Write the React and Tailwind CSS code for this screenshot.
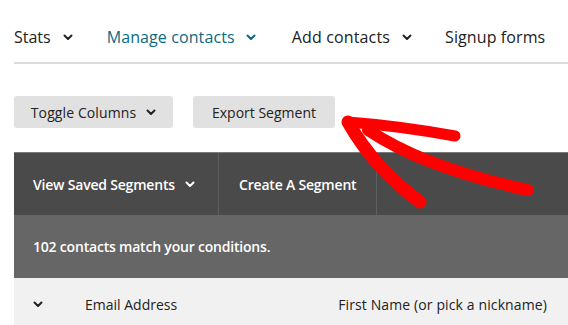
const Chevron = ({ className = "" }) => (
  <svg width="10" height="7" viewBox="0 0 10 7" className={className}>
    <polyline points="1.5,1.5 5,5 8.5,1.5" fill="none" stroke="currentColor" strokeWidth="2" strokeLinecap="round" strokeLinejoin="round" />
  </svg>
);

export default function App() {
  return (
    <div
      className="relative w-[568px] h-[325px] overflow-hidden bg-white"
      style={{ fontFamily: '"Open Sans", "Liberation Sans", sans-serif' }}
    >
      <div className="pl-[14px]">
        {/* top nav */}
        <nav className="flex items-center pt-[25px] pb-[13px] border-b-2 border-[#dcdcdc] text-[16px] leading-[24px] text-[#222]">
          <div className="flex items-center">
            <span>Stats</span>
            <Chevron className="ml-[12px] text-[#222]" />
          </div>
          <div className="flex items-center ml-[34px] text-[#0b6a80]">
            <span className="tracking-[0.1px]">Manage contacts</span>
            <Chevron className="ml-[11px]" />
          </div>
          <div className="flex items-center ml-[36px]">
            <span className="tracking-[0.15px]">Add contacts</span>
            <Chevron className="ml-[12px]" />
          </div>
          <div className="ml-[33px] tracking-[0.1px]">Signup forms</div>
        </nav>

        {/* buttons */}
        <div className="flex gap-[20px] mt-[32px] text-[14px] text-[#222]">
          <button className="flex items-center justify-center w-[159px] h-[32px] rounded-[3px] bg-[#e1e1e1]">
            <span className="tracking-[0.1px]">Toggle Columns</span>
            <Chevron className="ml-[10px]" />
          </button>
          <button className="flex items-center justify-center w-[142px] h-[32px] rounded-[3px] bg-[#e1e1e1]">
            Export Segment
          </button>
        </div>

        {/* segment bar */}
        <div className="mt-[24px] text-[14px] font-semibold tracking-[-0.2px] text-white">
          <div className="flex h-[63px] bg-[#4a4a4a] border-t border-[#7a7a7a]">
            <div className="flex items-center w-[205px] pl-[19px] border-r border-[#5e5e5e]">
              <span>View Saved Segments</span>
              <Chevron className="ml-[10px]" />
            </div>
            <div className="flex items-center w-[158px] pl-[20px] border-r border-[#5e5e5e]">
              Create A Segment
            </div>
          </div>
          <div className="flex items-center h-[63px] pl-[19px] bg-[#666]">
            102 contacts match your conditions.
          </div>
        </div>

        {/* table header */}
        <div className="flex items-center h-[52px] bg-[#f1f1f1] text-[14px] text-[#222]">
          <Chevron className="ml-[19px]" />
          <span className="ml-[42px]">Email Address</span>
          <span className="ml-[161px] whitespace-nowrap tracking-[0.12px]">First Name (or pick a nickname)</span>
        </div>
      </div>

      {/* red arrow annotation */}
      <svg className="absolute inset-0 pointer-events-none" width="568" height="325" viewBox="0 0 568 325">
        <g fill="none" stroke="#ff0000" strokeLinecap="round" strokeLinejoin="round">
          <path d="M348,122 Q400,126 455,136" strokeWidth="11" />
          <path d="M348,122 Q374,168 420,202" strokeWidth="13" />
          <path d="M368,130 Q425,168 528,190" strokeWidth="12" />
        </g>
      </svg>
    </div>
  );
}
